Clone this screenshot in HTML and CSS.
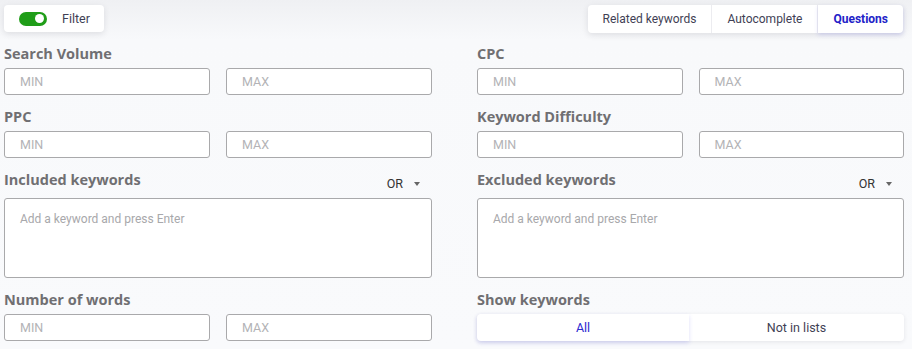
FILE: index.html
```html
<!DOCTYPE html>
<html>
<head>
<meta charset="utf-8">
<link rel="stylesheet" href="styles.css">
</head>
<body>
<div class="page">
  <div class="topbar">
    <div class="filter-card">
      <span class="toggle"><span class="knob"></span></span>
      <span class="filter-text">Filter</span>
    </div>
    <div class="tabs">
      <div class="tab">Related keywords</div>
      <div class="tab">Autocomplete</div>
      <div class="tab active">Questions</div>
    </div>
  </div>
  <div class="grid">
    <div class="col">
      <div class="field">
        <div class="label-row"><span class="label">Search Volume</span></div>
        <div class="pair"><div class="input">MIN</div><div class="input">MAX</div></div>
      </div>
      <div class="field">
        <div class="label-row"><span class="label">PPC</span></div>
        <div class="pair"><div class="input">MIN</div><div class="input">MAX</div></div>
      </div>
      <div class="field">
        <div class="label-row tall"><span class="label">Included keywords</span><span class="or">OR <span class="caret"></span></span></div>
        <div class="textarea">Add a keyword and press Enter</div>
      </div>
      <div class="field">
        <div class="label-row"><span class="label">Number of words</span></div>
        <div class="pair"><div class="input">MIN</div><div class="input">MAX</div></div>
      </div>
    </div>
    <div class="col">
      <div class="field">
        <div class="label-row"><span class="label">CPC</span></div>
        <div class="pair"><div class="input">MIN</div><div class="input">MAX</div></div>
      </div>
      <div class="field">
        <div class="label-row"><span class="label">Keyword Difficulty</span></div>
        <div class="pair"><div class="input">MIN</div><div class="input">MAX</div></div>
      </div>
      <div class="field">
        <div class="label-row tall"><span class="label">Excluded keywords</span><span class="or">OR <span class="caret"></span></span></div>
        <div class="textarea">Add a keyword and press Enter</div>
      </div>
      <div class="field">
        <div class="label-row"><span class="label">Show keywords</span></div>
        <div class="segment"><div class="seg active">All</div><div class="seg">Not in lists</div></div>
      </div>
    </div>
  </div>
</div>
</body>
</html>
```

FILE: styles.css
```css
* { box-sizing: border-box; }
html, body { margin: 0; padding: 0; }
body {
  width: 912px;
  height: 349px;
  overflow: hidden;
  background: linear-gradient(#eff0f3 0px, #f8f9fb 40px, #f9fafc 100%);
  font-family: Roboto, "Liberation Sans", sans-serif;
  font-size: 12px;
  color: #3c3c4a;
}
.page { padding: 5px 8px 0 4px; }
.topbar {
  display: flex;
  justify-content: space-between;
  align-items: flex-start;
  height: 28px;
}
.filter-card {
  width: 100px;
  height: 27px;
  background: #fff;
  border-radius: 4px;
  box-shadow: 0 2px 6px rgba(40, 40, 60, 0.12);
  display: flex;
  align-items: center;
  padding-left: 15px;
}
.toggle {
  width: 28px;
  height: 14px;
  border-radius: 7px;
  background: #1f9d18;
  position: relative;
  display: inline-block;
}
.knob {
  position: absolute;
  right: 3px;
  top: 2.5px;
  width: 9px;
  height: 9px;
  border-radius: 50%;
  background: #fff;
}
.filter-text { margin-left: 15px; font-size: 12.5px; color: #3f3f55; }
.tabs {
  display: flex;
  height: 28px;
  background: #fff;
  border-radius: 4px;
  box-shadow: 0 2px 6px rgba(40, 40, 60, 0.12);
  margin-right: 1px;
}
.tab {
  padding: 0 15px;
  display: flex;
  align-items: center;
  font-size: 12px;
  color: #3f3f55;
  border-right: 1px solid #ececf0;
}
.tab.active {
  border-right: none;
  color: #2222c8;
  font-weight: 700;
  border-radius: 0 4px 4px 0;
  box-shadow: 0 2px 4px rgba(60, 60, 220, 0.15);
}
.grid {
  display: grid;
  grid-template-columns: 428px 427px;
  column-gap: 45px;
  margin-top: 11px;
}
.field { margin-bottom: 12px; }
.label-row {
  display: flex;
  justify-content: space-between;
  align-items: flex-start;
  height: 20px;
  margin-bottom: 4px;
}
.label-row.tall { height: 24px; }
.label {
  font-family: "Open Sans", sans-serif;
  font-weight: 700;
  font-size: 14.5px;
  line-height: 20px;
  color: #706f72;
}
.or {
  height: 24px;
  padding-top: 3px;
  display: flex;
  align-items: center;
  font-size: 12.5px;
  color: #333;
  margin-right: 12px;
}
.caret {
  display: inline-block;
  width: 0; height: 0;
  border-left: 3.5px solid transparent;
  border-right: 3.5px solid transparent;
  border-top: 4px solid #666;
  margin-left: 11px;
  margin-top: 1px;
}
.pair { display: flex; gap: 16px; }
.input {
  width: 206px;
  height: 27px;
  background: #fff;
  border: 1px solid #a9a9ab;
  border-radius: 3px;
  padding-left: 15px;
  display: flex;
  align-items: center;
  font-size: 12.5px;
  color: #b3b3b6;
}
.textarea {
  width: 428px;
  height: 80px;
  background: #fff;
  border: 1px solid #a9a9ab;
  border-radius: 3px;
  padding: 13px 15px;
  font-size: 12px;
  color: #a8a8ab;
}
.col:last-child .textarea { width: 427px; }
.segment {
  display: flex;
  height: 27px;
  background: #fff;
  border-radius: 4px;
  box-shadow: 0 1px 4px rgba(40, 40, 60, 0.1);
}
.seg {
  flex: 1;
  display: flex;
  align-items: center;
  justify-content: center;
  font-size: 12.5px;
  color: #3f3f55;
}
.seg.active {
  flex: 0 0 212px;
  color: #2a2ad0;
  border-radius: 4px 0 0 4px;
  box-shadow: 0 2px 4px rgba(70, 70, 230, 0.18);
}
```
